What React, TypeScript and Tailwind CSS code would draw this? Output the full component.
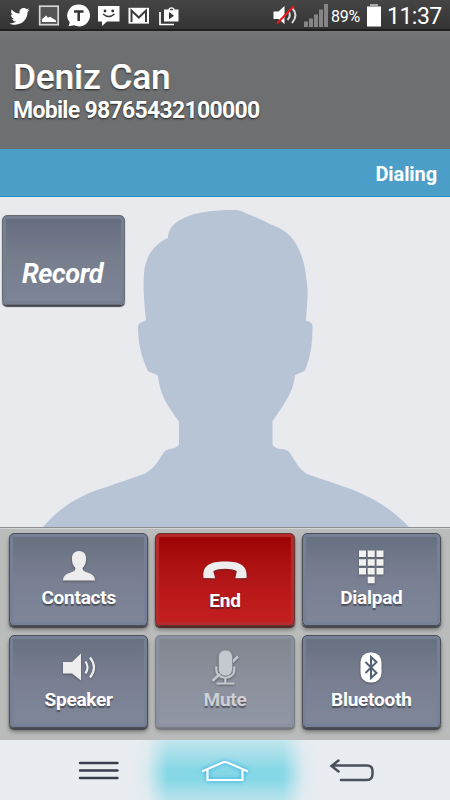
import type { ReactNode } from 'react';
import clsx from 'clsx';

type KeyVariant = 'default' | 'danger' | 'disabled';

const KEY_STYLES: Record<KeyVariant, string> = {
  default:
    'border-[#4a4e56] bg-linear-to-b from-[#65707f] via-[#7a7f92] to-[#7e8799] shadow-[inset_0_0_1px_3px_#768096,0_2px_1px_#44484d,0_4px_4px_#777]',
  danger:
    'border-[#653232] bg-linear-to-b from-[#9d0303] via-[#b41617] to-[#c51f20] shadow-[inset_0_0_1px_3px_#b62b2b,0_2px_1px_#572525,0_4px_4px_#777]',
  disabled:
    'border-[#787d86] bg-linear-to-b from-[#80868f] via-[#8c909d] to-[#9197a5] shadow-[inset_0_0_1px_3px_#8b91a1,0_2px_1px_#73777c,0_4px_4px_#999]',
};

function StatusBar() {
  return (
    <header className="flex h-[31px] shrink-0 items-center justify-between border-b-2 border-[#211d21] bg-linear-to-b from-[#454545] to-[#343434] text-white">
      <svg width="185" height="29" viewBox="0 0 185 29" fill="#fff">
        <path
          d="M9 24c3 .2 5-.5 7-1.8-2-.1-3.400-1-4-2.700h1.900c-2-.7-3.100-2.200-3.100-4.300l1.900.5c-1.900-1.500-2.300-3.500-1.200-5.500 2.100 2.500 4.700 3.900 8 4-.8-3.500 1.200-5.700 4-5.700 1.300 0 2.200.4 3 1.300l2.500-1-1.800 2.400 2.200-.6-2 2.100C27.300 19.500 22.500 25.300 15 25.300c-2.300 0-4.300-.4-6-1.300z"
          transform="translate(.2 -.6)"
        />
        <rect x="39.700" y="6.200" width="18.500" height="18.500" fill="#555" stroke="#d5d5d5" strokeWidth="1.700" />
        <path d="M42 22v-3l2-1.600 2-2 2 2.300 2-1 3 1.700 3 2V22z" />
        <path d="M79 4.500a11 11 0 1 1-5 20.800l-5.500 1 1.300-3.800A11 11 0 0 1 79 4.500z" />
        <path d="M74 11.500h9.500M78.700 11.500V21" stroke="#333" strokeWidth="2.500" fill="none" />
        <path d="M98 6h21.500v15.500H107L102 26v-4.500h-4z" />
        <path d="M103 14q5.700 5 11.500 0" stroke="#333" strokeWidth="1.500" fill="none" />
        <circle cx="105" cy="11" r="1.400" fill="#333" />
        <circle cx="112.700" cy="11" r="1.400" fill="#333" />
        <rect x="128.500" y="7.800" width="20.500" height="15.800" />
        <path d="M131.500 22V10.500l7.300 7 7.200-7V22" stroke="#3c3c3c" strokeWidth="2" fill="none" />
        <path d="M160 12v12.500h14" stroke="#fff" strokeWidth="1.700" fill="none" />
        <path d="M164 9.500h4.500c0-3 6-3 6 0h4v12h-14.500z" />
        <path d="M170 9.500h3" stroke="#444" strokeWidth="1.500" />
        <path d="M169 12l5 3.700-5 3.500z" fill="#333" />
      </svg>
      <div className="flex items-center pr-[9px]">
        <svg width="58" height="29" viewBox="270 0 58 29">
          <path d="M271.500 11.500h5l6-5.500v18l-6-5h-5z" fill="#fff" />
          <path d="M286.500 11q3 4.500-1 9M290 8q7 7 0 15" fill="none" stroke="#ddd" strokeWidth="1.900" />
          <path d="M275 23.500l17-17.500" stroke="#f01818" strokeWidth="2" />
          <path d="M302 21.500h4V27h-4zM307 18.500h4V27h-4zM312 14.500h4V27h-4zM317 9.500h4V27h-4zM322 4h4v23h-4z" fill="#858585" />
        </svg>
        <span className="w-[33px] pt-[4px] pl-[1px] text-[16px] leading-none tracking-[-0.3px] whitespace-nowrap">
          89%
        </span>
        <svg width="24" height="29" viewBox="363 0 24 29">
          <path d="M370 4h8v2h3v20.500h-14V6h3z" fill="#fff" />
          <path d="M370 4h8v2h3v1h-14V6h3z" fill="#aaa" />
        </svg>
        <span className="w-[54px] pt-[4px] text-right text-[23px] leading-none tracking-[-0.5px] whitespace-nowrap">
          11:37
        </span>
      </div>
    </header>
  );
}

function CallKey({
  label,
  icon,
  variant = 'default',
  labelClass = 'pt-[1px]',
}: {
  label: string;
  icon: ReactNode;
  variant?: KeyVariant;
  labelClass?: string;
}) {
  return (
    <button
      disabled={variant === 'disabled'}
      className={clsx(
        'flex h-[93px] w-full flex-col items-center rounded-[5px] border pt-[12px] font-bold text-white',
        KEY_STYLES[variant],
      )}
    >
      <span className={clsx('flex flex-col items-center', variant === 'disabled' && 'text-[#cdd0d5]')}>
        {icon}
        <span
          className={clsx(
            'text-[19px] leading-[22px] tracking-[-0.25px] [text-shadow:0_2px_1px_#2228]',
            labelClass,
          )}
        >
          {label}
        </span>
      </span>
    </button>
  );
}

const iconProps = { width: 44, height: 40, viewBox: '0 0 44 40', className: 'drop-shadow-[0_1px_1px_#3338]' };

const ContactsIcon = (
  <svg {...iconProps}>
    <path
      d="M22 5c-5 0-7.500 3.500-7 9 .3 4 1.500 6 3.500 8-.3 2-.8 3-3.500 4-5 1.700-9 3.500-9 8.500h32c0-5-4-6.800-9-8.500-2.700-1-3.200-2-3.500-4 2-2 3.200-4 3.500-8 .5-5.500-2-9-7-9z"
      fill="#ededed"
    />
  </svg>
);

const EndIcon = (
  <svg {...iconProps}>
    <path
      d="M.5 32C-.5 21 4.500 15.500 22 15.500s22.500 5.500 21.500 16.500l-11 .3c.2-3.500 1-4.500 1.300-7.300-6-3-17.500-3-23.400 0 .3 2.800 1.200 4.300 1.700 7.300z"
      fill="#eee"
    />
  </svg>
);

const DialpadIcon = (
  <svg {...iconProps}>
    <path
      d="M10 4.500h7v6.500h-7zM18.700 4.500h7V11h-7zM27.500 4.500h7V11h-7zM10 13.300h7v6.500h-7zM18.700 13.300h7v6.500h-7zM27.500 13.300h7v6.500h-7zM10 22h7v6.500h-7zM18.700 22h7v6.500h-7zM27.500 22h7v6.500h-7zM18.700 30.700h7v6.500h-7z"
      fill="#f1f1f1"
    />
  </svg>
);

const SpeakerIcon = (
  <svg {...iconProps}>
    <path d="M6 14h9l9-8.500v27L15 25.500H6z" fill="#eee" />
    <path d="M28.500 13.500q4 6 0 12M33 9.500q8 10 0 20" fill="none" stroke="#eee" strokeWidth="2.200" />
  </svg>
);

const MuteIcon = (
  <svg {...iconProps}>
    <path d="M35 8.500L9.500 33" fill="none" stroke="#c5c8ce" strokeWidth="2.600" />
    <rect x="15.500" y="2" width="14" height="26" rx="6.500" fill="#c5c8ce" stroke="#868b96" />
    <path d="M13.300 18.500v3c0 11 18 11 18 0v-3M22.300 30v5M13.500 35.500h18" fill="none" stroke="#c5c8ce" strokeWidth="2.200" />
  </svg>
);

const BluetoothIcon = (
  <svg {...iconProps}>
    <rect x="11.500" y="4.500" width="21" height="30" rx="9.500" fill="#fff" />
    <path d="M16.500 14l11 11-5.500 5V9l5.500 5-11 11" fill="none" stroke="#536075" strokeWidth="2" />
  </svg>
);

export default function App() {
  return (
    <div className="flex h-[800px] w-[450px] flex-col overflow-hidden bg-[#e9eaee] font-['Roboto',sans-serif]">
      <StatusBar />

      {/* Caller */}
      <section className="h-[118px] shrink-0 bg-linear-to-b from-[#757678] via-[#6e6f71] via-10% to-[#6e6f71] pt-[27px] pl-[13px] text-white">
        <h1 className="text-[35px] leading-[40px] font-medium [text-shadow:0_1px_2px_#222,0.4px_0_0_#fff]">
          Deniz Can
        </h1>
        <p className="text-[23px] leading-[26px] font-bold tracking-[-0.7px] [text-shadow:0_1px_2px_#222]">
          Mobile 98765432100000
        </p>
      </section>
      <div className="flex h-[48px] shrink-0 items-center justify-end border-b border-[#1b92c5] bg-[#4b9ec8] pt-[2px] pr-[13px] text-[20px] font-bold tracking-[-0.1px] text-white">
        Dialing
      </div>

      {/* Contact photo placeholder with the record key on top */}
      <main className="relative h-[330px] shrink-0 bg-[#e9eaee]">
        <svg width="450" height="330" viewBox="0 197 450 330" className="block">
          <path
            d="M233 210C240 209.500 243 212 249 214.500C260 219 264 221 270 224C280 228 286 231 292 238C302 251 305 265 306.500 280C308.500 293 307.500 296 306 320.500C310 322 312.500 323 312.500 326C312.500 344 311 355 305 370.500C301 373 296 374 295 375.500C293 394 283 405 272.500 421.500V444.500C275 448 277 449 283 449C287 450 288 451 290 453C295 461 299 469 307 474L342 486C369 495 390 507 409 527H43C60 507 78 497 97 490C110 486 126 480 144 474C154 469 159 460 164 452C168 447 174 451 179 444.500V421.500C166 404 160 394 158 376C155 373 151 373 148 371C141 356 138 343 138 326C139 322 144 322 146 320C144 300 143 289 144 274C145 255 156 243 168 238C168 220 193 210 233 210Z"
            fill="#b7c4d6"
          />
        </svg>
        <button className="absolute top-[18px] left-[2px] flex h-[90px] w-[123px] items-end justify-center rounded-[5px] border border-[#666c72] bg-linear-to-b from-[#666b80] via-[#777e8c] to-[#7e849a] pr-[2px] pb-[12px] text-[27px] leading-[36px] font-bold tracking-[-0.4px] text-white italic shadow-[inset_0_0_1px_3px_#768092,0_2px_1px_#44484d]">
          Record
        </button>
      </main>

      {/* In-call keys */}
      <section className="grid h-[213px] shrink-0 grid-cols-3 content-start gap-x-[7px] gap-y-[9px] border-t border-[#8c8e91] bg-[#babcbb] pt-[5px] pr-[9px] pl-[9px] shadow-[inset_0_1px_0_#d3d4d5]">
        <CallKey label="Contacts" icon={ContactsIcon} />
        <CallKey label="End" icon={EndIcon} variant="danger" labelClass="pt-[4px]" />
        <CallKey label="Dialpad" icon={DialpadIcon} />
        <CallKey label="Speaker" icon={SpeakerIcon} />
        <CallKey label="Mute" icon={MuteIcon} variant="disabled" />
        <CallKey label="Bluetooth" icon={BluetoothIcon} />
      </section>

      {/* Navigation bar */}
      <nav className="flex h-[60px] shrink-0 bg-[#e9edf1]">
        <svg width="450" height="60" viewBox="0 740 450 60" fill="none">
          <defs>
            <linearGradient id="glowX">
              <stop offset="0" stopColor="#86d8e6" stopOpacity="0" />
              <stop offset=".08" stopColor="#86d8e6" stopOpacity=".15" />
              <stop offset=".19" stopColor="#86d8e6" />
              <stop offset=".81" stopColor="#86d8e6" />
              <stop offset=".92" stopColor="#86d8e6" stopOpacity=".15" />
              <stop offset="1" stopColor="#86d8e6" stopOpacity="0" />
            </linearGradient>
            <linearGradient id="fadeY" x2="0" y2="1">
              <stop offset="0" stopColor="#e9edf1" stopOpacity=".6" />
              <stop offset=".5" stopColor="#e9edf1" stopOpacity="0" />
              <stop offset=".65" stopColor="#e9edf1" stopOpacity="0" />
              <stop offset="1" stopColor="#e9edf1" stopOpacity=".5" />
            </linearGradient>
          </defs>
          <rect x="132" y="740" width="186" height="60" fill="url(#glowX)" />
          <rect x="132" y="740" width="186" height="60" fill="url(#fadeY)" />
          <path d="M80 763h37.500M80 770.500h37.500M80 778h37.500" stroke="#383e4b" strokeWidth="2.400" strokeLinecap="round" />
          <g className="drop-shadow-[0_0_2px_#159fe0]" stroke="#fff" strokeWidth="2.200">
            <path d="M202 771.500l20.500-9q2.500-1 5 0l20.500 9" />
            <path d="M207.500 770v10h35v-10" />
          </g>
          <path
            d="M338.500 760.500l-7 5.500 7 5.500M333 765.500h34q5.500 0 5.500 5.500v3q0 6-5.500 6H341"
            stroke="#4a505c"
            strokeWidth="2.500"
            strokeLinecap="round"
          />
        </svg>
      </nav>
    </div>
  );
}
